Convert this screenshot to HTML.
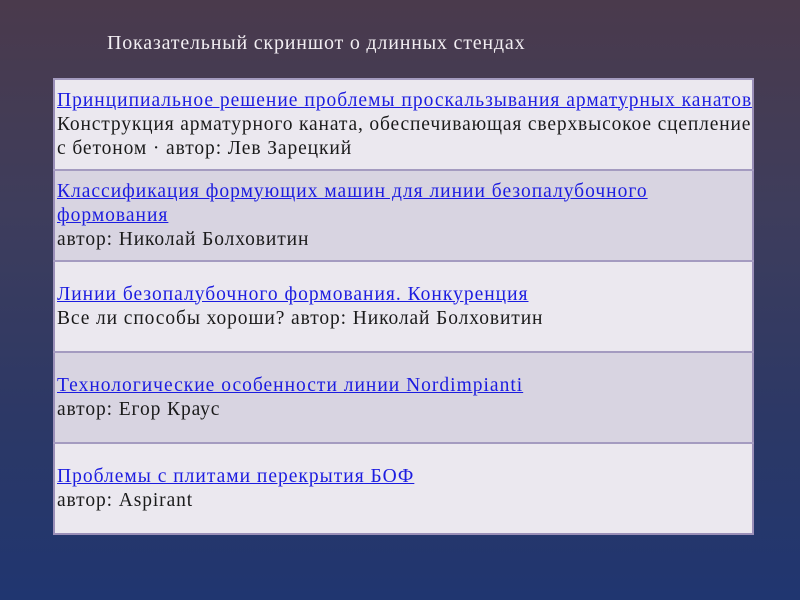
<!DOCTYPE html>
<html><head><meta charset="utf-8"><style>
html,body{margin:0;padding:0;}
body{width:800px;height:600px;overflow:hidden;background:linear-gradient(180deg,#4a3a4c 0%,#3e3d5c 35%,#2c3866 70%,#203670 100%);font-family:"Liberation Serif","Noto Serif CJK SC",serif;position:relative;}
.title{position:absolute;left:107px;top:32px;color:#f2eef2;font-size:20px;letter-spacing:0.8px;white-space:nowrap;}
table{position:absolute;left:53px;top:78px;width:701px;table-layout:fixed;border-collapse:collapse;border:2px solid #9a8fb8;}
td{height:89px;padding:0 0 0 2px;border-top:2px solid #a49bc0;vertical-align:middle;font-size:19.5px;line-height:24px;color:#1a1a1a;letter-spacing:0.9px;white-space:nowrap;overflow:hidden;}
tr.a td{background:#ebe8ef;}
tr.b td{background:#d8d4e1;}
a{color:#1c1ce0;text-decoration:underline;letter-spacing:1px;}
.s{letter-spacing:0.85px;}
</style></head><body>
<div class="title">Показательный скриншот о длинных стендах</div>
<table>
<tr class="a"><td><a>Принципиальное решение проблемы проскальзывания арматурных канатов</a><br><span class="s">Конструкция арматурного каната, обеспечивающая сверхвысокое сцепление</span><br>с бетоном · автор: Лев Зарецкий</td></tr>
<tr class="b"><td><a>Классификация формующих машин для линии безопалубочного<br>формования</a><br>автор: Николай Болховитин</td></tr>
<tr class="a"><td><a>Линии безопалубочного формования. Конкуренция</a><br>Все ли способы хороши? автор: Николай Болховитин</td></tr>
<tr class="b"><td><a>Технологические особенности линии Nordimpianti</a><br>автор: Егор Краус</td></tr>
<tr class="a"><td><a>Проблемы с плитами перекрытия БОФ</a><br>автор: Aspirant</td></tr>
</table>
</body></html>
